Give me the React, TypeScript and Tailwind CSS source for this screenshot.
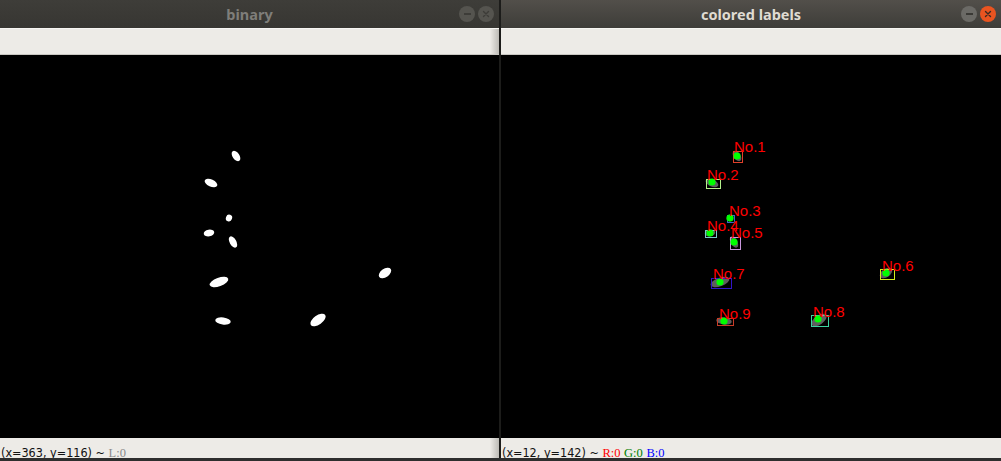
import React from "react";

type Blob = { x: number; y: number; rx: number; ry: number; rot: number };

// blob shapes, image-relative coords (each image is 500 wide)
const blobs: Blob[] = [
  { x: 236, y: 101, rx: 5.8, ry: 3.4, rot: 55 },
  { x: 211, y: 128, rx: 6.8, ry: 3.6, rot: 25 },
  { x: 229, y: 163, rx: 3.1, ry: 3.5, rot: 20 },
  { x: 209, y: 178, rx: 5.3, ry: 3.3, rot: -10 },
  { x: 233, y: 187, rx: 6.2, ry: 3.3, rot: 60 },
  { x: 219, y: 227, rx: 9.8, ry: 4.2, rot: -20 },
  { x: 223, y: 266, rx: 7.8, ry: 3.5, rot: 8 },
  { x: 318, y: 265, rx: 8.8, ry: 4.6, rot: -35 },
  { x: 385, y: 218, rx: 7, ry: 4.2, rot: -35 },
];

const labels = [
  { n: 1, box: [232, 96, 9, 11], color: "#e0402a", dot: [236, 101], text: [233, 97] },
  { n: 2, box: [205, 124, 14, 9], color: "#b4f08c", dot: [211, 127], text: [206, 125] },
  { n: 3, box: [226, 160, 7, 7], color: "#3c64c8", dot: [229, 163], text: [228, 161] },
  { n: 4, box: [204, 175, 11, 7], color: "#78c8c8", dot: [209, 178], text: [206, 176] },
  { n: 5, box: [229, 182, 10, 12], color: "#c896dc", dot: [233, 187], text: [230, 183] },
  { n: 6, box: [379, 214, 14, 10], color: "#d2f01e", dot: [385, 218], text: [381, 216] },
  { n: 7, box: [210, 223, 20, 10], color: "#3214c8", dot: [219, 227], text: [212, 224] },
  { n: 8, box: [310, 260, 17, 11], color: "#3cd2a0", dot: [317, 264], text: [312, 262] },
  { n: 9, box: [216, 263, 16, 7], color: "#c83c28", dot: [223, 266], text: [218, 264] },
];

function TitleBar({ title, active }: { title: string; active: boolean }) {
  return (
    <div
      className={
        "grid h-[28px] grid-cols-[1fr_auto_1fr] items-center " +
        (active
          ? "bg-gradient-to-b from-[#524f4a] to-[#3e3d39]"
          : "bg-gradient-to-b from-[#3e3d39] to-[#373632]")
      }
    >
      <div />
      <div
        className={
          "text-[14.5px] font-bold leading-none " +
          (active ? "text-[#dfdbd2]" : "text-[#7f7e7a]")
        }
        style={{ fontFamily: '"Noto Sans", "DejaVu Sans", sans-serif' }}
      >
        {title}
      </div>
      <div className="flex justify-end gap-[3px] pr-[5px]">
        <div
          className={
            "flex h-[16px] w-[16px] items-center justify-center rounded-full " +
            (active ? "bg-[#6b6a66]" : "bg-[#55544f]")
          }
        >
          <div className={"h-[2px] w-[7px] " + (active ? "bg-[#3a3935]" : "bg-[#3d3c38]")} />
        </div>
        <div
          className={
            "flex h-[16px] w-[16px] items-center justify-center rounded-full " +
            (active ? "bg-[#e95420]" : "bg-[#55544f]")
          }
        >
          <svg width="8" height="8" viewBox="0 0 8 8">
            <path
              d="M1.5 1.5 L6.5 6.5 M6.5 1.5 L1.5 6.5"
              stroke={active ? "#3a2a22" : "#3d3c38"}
              strokeWidth="1.4"
              strokeLinecap="round"
            />
          </svg>
        </div>
      </div>
    </div>
  );
}

function Toolbar({ shadow }: { shadow?: boolean }) {
  return (
    <div className="flex h-[27px] border-t border-[#f6f5f2] border-b border-b-[#c9c7c2] bg-[#edebe7]">
      <div className="flex-1" />
      {shadow && <div className="w-[9px] bg-gradient-to-r from-[#edebe7] to-[#bdbbb6]" />}
    </div>
  );
}

function StatusBar({ children, shadow }: { children: React.ReactNode; shadow?: boolean }) {
  return (
    <div className="flex h-[20px] overflow-hidden bg-[#edebe7]">
      <div
        className="flex-1 whitespace-pre pl-[1px] pt-[7px] text-[12.5px] leading-[15px] text-[#111]"
        style={{ fontFamily: '"DejaVu Sans Condensed", "DejaVu Sans", sans-serif' }}
      >
        {children}
      </div>
      {shadow && <div className="w-[9px] bg-gradient-to-r from-[#edebe7] to-[#bdbbb6]" />}
    </div>
  );
}

const serif = { fontFamily: '"Liberation Serif", "DejaVu Serif", serif' };

function BinaryImage() {
  return (
    <svg width="499" height="383" viewBox="0 0 499 383" className="block bg-black">
      {blobs.map((b, i) => (
        <ellipse
          key={i}
          cx={b.x}
          cy={b.y}
          rx={b.rx}
          ry={b.ry}
          fill="#ffffff"
          transform={`rotate(${b.rot} ${b.x} ${b.y})`}
        />
      ))}
    </svg>
  );
}

function LabelImage() {
  return (
    <svg width="500" height="383" viewBox="0 0 500 383" className="block bg-black">
      {blobs.map((b, i) => (
        <ellipse
          key={i}
          cx={b.x}
          cy={b.y}
          rx={b.rx}
          ry={b.ry}
          fill="#5e5e5e"
          transform={`rotate(${b.rot} ${b.x} ${b.y})`}
        />
      ))}
      {labels.map((l) => (
        <g key={l.n}>
          <rect
            x={l.box[0] + 0.5}
            y={l.box[1] + 0.5}
            width={l.box[2]}
            height={l.box[3]}
            fill="none"
            stroke={l.color}
            strokeWidth="1"
          />
          <circle cx={l.dot[0]} cy={l.dot[1]} r="3.6" fill="#00ff00" />
          <text
            x={l.text[0]}
            y={l.text[1]}
            fill="#ff0000"
            fontSize="15"
            fontFamily='"Liberation Sans", Arial, sans-serif'
          >
            No.{l.n}
          </text>
        </g>
      ))}
    </svg>
  );
}

export default function App() {
  return (
    <div className="flex h-[461px] w-[1001px] flex-col overflow-hidden bg-[#2e2e2e]">
      <div className="flex h-[458px]">
        <div className="flex w-[499px] flex-col">
          <TitleBar title="binary" active={false} />
          <Toolbar shadow />
          <BinaryImage />
          <StatusBar shadow>
            {"(x=363, y=116) ~ "}
            <span className="text-[#8a8a8a]" style={serif}>
              L:0
            </span>
          </StatusBar>
        </div>
        <div className="w-[2px] bg-[#1c1c1a]" />
        <div className="flex w-[500px] flex-col">
          <TitleBar title="colored labels" active />
          <Toolbar />
          <LabelImage />
          <StatusBar>
            {"(x=12, y=142) ~ "}
            <span className="text-[#ff0000]" style={serif}>
              R:0
            </span>{" "}
            <span className="text-[#008000]" style={serif}>
              G:0
            </span>{" "}
            <span className="text-[#0000ff]" style={serif}>
              B:0
            </span>
          </StatusBar>
        </div>
      </div>
      <div className="h-[3px] bg-[#2e2e2e]" />
    </div>
  );
}
